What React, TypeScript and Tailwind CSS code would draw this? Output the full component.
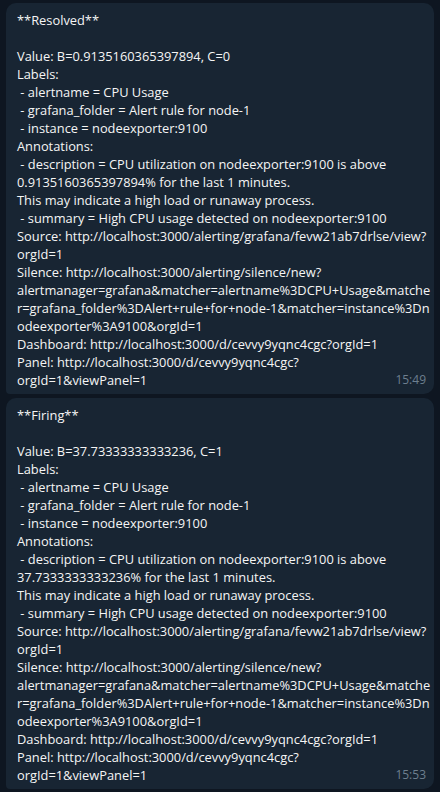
const resolved = [
  "**Resolved**",
  "",
  "Value: B=0.9135160365397894, C=0",
  "Labels:",
  " - alertname = CPU Usage",
  " - grafana_folder = Alert rule for node-1",
  " - instance = nodeexporter:9100",
  "Annotations:",
  " - description = CPU utilization on nodeexporter:9100 is above",
  "0.9135160365397894% for the last 1 minutes.",
  "This may indicate a high load or runaway process.",
  " - summary = High CPU usage detected on nodeexporter:9100",
  "Source: http://localhost:3000/alerting/grafana/fevw21ab7drlse/view?",
  "orgId=1",
  "Silence: http://localhost:3000/alerting/silence/new?",
  "alertmanager=grafana&matcher=alertname%3DCPU+Usage&matche",
  "r=grafana_folder%3DAlert+rule+for+node-1&matcher=instance%3Dn",
  "odeexporter%3A9100&orgId=1",
  "Dashboard: http://localhost:3000/d/cevvy9yqnc4cgc?orgId=1",
  "Panel: http://localhost:3000/d/cevvy9yqnc4cgc?",
  "orgId=1&viewPanel=1",
];

const firing = [
  "**Firing**",
  "",
  "Value: B=37.73333333333236, C=1",
  "Labels:",
  " - alertname = CPU Usage",
  " - grafana_folder = Alert rule for node-1",
  " - instance = nodeexporter:9100",
  "Annotations:",
  " - description = CPU utilization on nodeexporter:9100 is above",
  "37.7333333333236% for the last 1 minutes.",
  "This may indicate a high load or runaway process.",
  " - summary = High CPU usage detected on nodeexporter:9100",
  "Source: http://localhost:3000/alerting/grafana/fevw21ab7drlse/view?",
  "orgId=1",
  "Silence: http://localhost:3000/alerting/silence/new?",
  "alertmanager=grafana&matcher=alertname%3DCPU+Usage&matche",
  "r=grafana_folder%3DAlert+rule+for+node-1&matcher=instance%3Dn",
  "odeexporter%3A9100&orgId=1",
  "Dashboard: http://localhost:3000/d/cevvy9yqnc4cgc?orgId=1",
  "Panel: http://localhost:3000/d/cevvy9yqnc4cgc?",
  "orgId=1&viewPanel=1",
];

const Bubble = ({ lines, time }: { lines: string[]; time: string }) => (
  <div className="relative mx-[6px] rounded-[10px] rounded-bl-[4px] bg-[#182533] pl-[11px] pr-[8px] pt-[8px] pb-[5px]">
    {lines.map((l, i) => (
      <div key={i} className="whitespace-pre h-[18px] leading-[18px] text-[12.85px] text-[#f5f5f5]">
        {l}
      </div>
    ))}
    <div className="absolute right-[8px] bottom-[6px] text-[12px] leading-[16px] text-[#6d7f8f]">
      {time}
    </div>
  </div>
);

export default function App() {
  return (
    <div
      className="w-[440px] h-[792px] overflow-hidden bg-[#0e1621] pt-[3px] flex flex-col gap-[4px]"
      style={{ fontFamily: '"Open Sans", "Noto Sans", sans-serif' }}
    >
      <Bubble lines={resolved} time="15:49" />
      <Bubble lines={firing} time="15:53" />
    </div>
  );
}
